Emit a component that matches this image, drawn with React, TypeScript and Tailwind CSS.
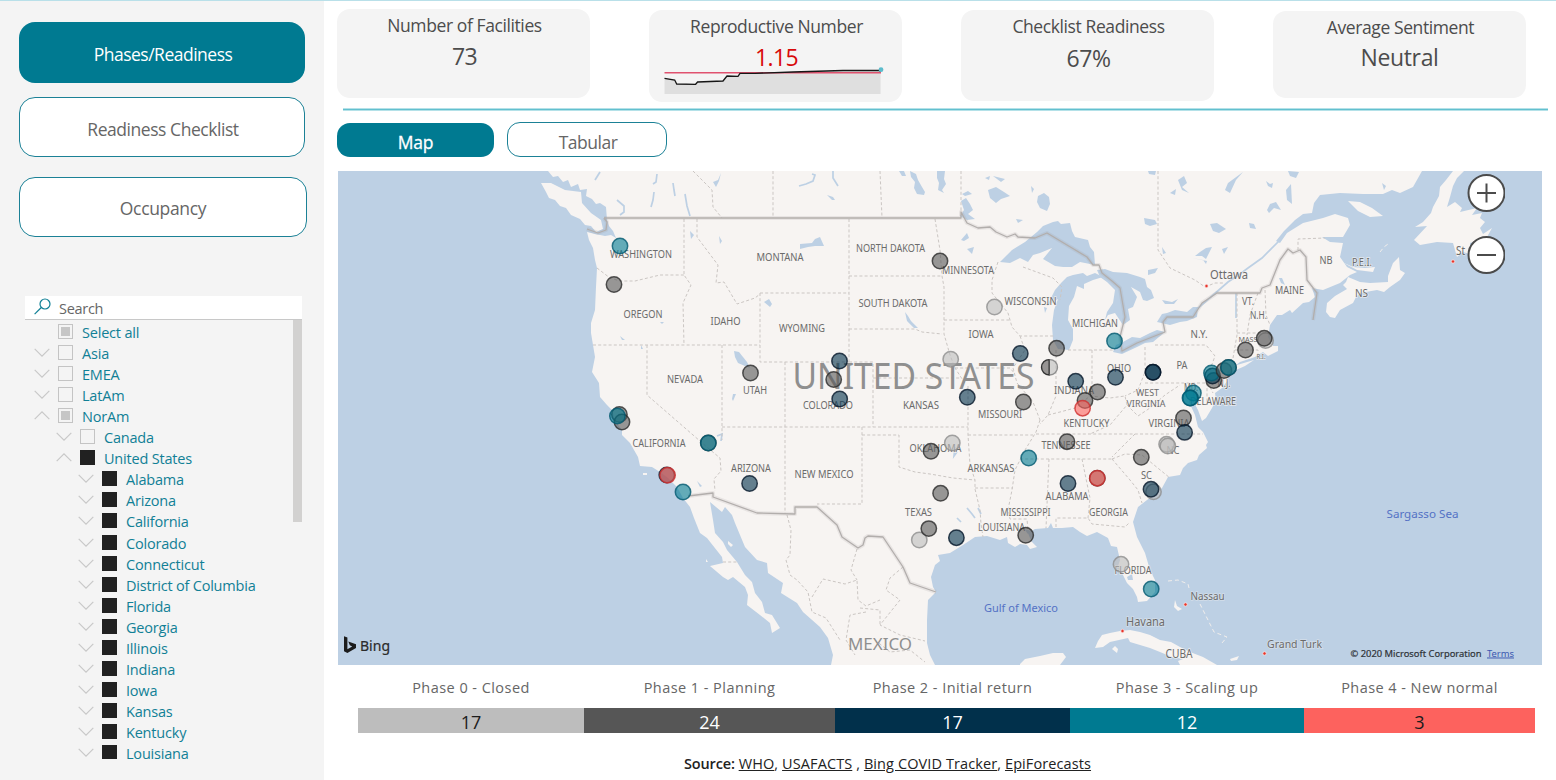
import React from "react";

type Label = [text: string, x: number, y: number, width: number, size?: number];

const LAND = [
  // Mainland
  "548,171 553,177 558,176 563,182 568,180 571,187 578,184 580,190 587,189 586,196 592,199 596,204 600,203 606,207 607,220 609,226 613,231 616,238 611,235 605,236 595,234 587,232 589,240 593,248 595,260 597,268 596,287 595,310 591,323 591,333 593,345 595,357 592,372 599,383 600,397 607,405 612,410 615,421 622,430 622,435 630,443 638,457 640,466 652,467 660,472 668,478 677,487 683,498 690,507 694,518 700,533 707,538 722,557 723,563 710,566 723,577 728,580 733,577 745,587 748,595 747,605 760,615 770,623 772,633 780,628 772,615 765,613 762,602 755,593 752,582 745,575 737,562 727,550 723,542 715,533 713,520 710,502 722,512 725,507 732,515 735,523 740,535 745,547 757,560 767,563 768,573 783,583 781,593 797,603 803,612 820,627 828,638 833,655 831,665 935,665 930,655 927,643 927,620 928,600 936,592 933,587 931,577 935,565 940,561 938,555 950,553 963,545 972,539 975,537 987,536 1000,540 1007,537 1008,543 1015,547 1020,544 1027,545 1030,549 1037,547 1032,542 1030,538 1028,533 1035,529 1048,528 1051,523 1053,528 1062,528 1073,527 1080,532 1087,536 1097,532 1108,538 1111,546 1117,547 1120,560 1118,566 1122,573 1127,583 1133,589 1137,597 1138,602 1147,601 1155,592 1155,580 1150,570 1145,553 1137,537 1133,522 1138,507 1147,500 1162,488 1168,477 1180,475 1183,468 1188,463 1197,460 1199,455 1207,448 1206,445 1208,442 1203,432 1198,427 1195,415 1189,402 1191,398 1198,410 1202,421 1206,418 1212,408 1216,400 1215,393 1222,388 1228,380 1227,372 1240,362 1255,357 1263,352 1268,356 1278,351 1278,346 1273,346 1268,337 1270,325 1277,315 1282,315 1290,310 1292,313 1303,303 1309,302 1315,297 1312,288 1323,290 1340,283 1350,275 1357,272 1347,267 1340,257 1343,243 1330,242 1322,237 1343,237 1350,225 1348,218 1335,214 1323,218 1303,223 1287,233 1280,243 1276,241 1284,231 1295,220 1303,214 1312,213 1314,203 1320,195 1340,193 1363,194 1383,194 1392,190 1400,193 1413,187 1422,171",
  // Vancouver Island
  "541,183 551,183 565,190 581,192 582,203 591,213 601,220 603,229 596,232 591,226 585,225 580,219 571,215 566,208 560,206 555,200 549,198 546,192",
  // Newfoundland
  "1453,171 1446,180 1440,187 1439,196 1433,207 1431,213 1423,222 1415,227 1427,226 1414,240 1420,245 1437,242 1453,243 1457,257 1463,252 1470,254 1470,243 1487,237 1492,228 1483,234 1480,228 1485,222 1480,218 1482,213 1472,215 1477,208 1460,212 1462,208 1455,202 1447,207 1450,197 1453,186 1457,178 1464,171",
  // Nova Scotia
  "1327,303 1326,312 1330,317 1335,318 1340,310 1353,303 1356,297 1360,293 1377,290 1384,292 1390,287 1400,280 1405,273 1400,270 1399,257 1393,263 1388,276 1388,282 1370,283 1360,282 1348,277 1346,282 1343,285 1347,289 1335,296",
  "1342,262 1353,267 1365,268 1375,267 1373,272 1357,270",
  // Anticosti
  "1348,201 1360,202 1372,208 1383,216 1370,217 1358,211",
  // Long Island
  "1229,372 1237,365 1254,360 1245,366 1236,370",
  // Cuba
  "1095,648 1098,641 1102,635 1110,633 1120,631 1130,630 1140,632 1150,635 1160,640 1171,642 1180,647 1190,652 1203,657 1217,665 1180,665 1178,661 1183,659 1172,657 1160,652 1150,648 1140,645 1130,642 1128,638 1110,642 1103,647",
  "1112,649 1115,646 1118,649 1117,653",
  "1020,664 1025,659 1040,656 1053,653 1063,653 1066,657 1060,665 1020,665",
  "1230,659 1239,656 1237,660 1231,661",
  "1175,600 1177,606 1182,609 1178,611 1174,607",
  "643,473 647,473 647,475 643,475",
  "706,559 708,562 706,562",
  "728,541 733,545 731,547 728,544",
];

const WATER = [
  // Superior
  "1000,262 1012,250 1025,242 1037,232 1043,226 1053,222 1058,221 1061,224 1070,223 1072,231 1075,237 1088,240 1090,247 1094,252 1095,265 1080,262 1072,267 1063,267 1055,266 1050,263 1043,259 1052,248 1040,253 1033,255 1028,262 1020,258 1010,263",
  // Michigan
  "1062,282 1067,277 1073,275 1083,273 1087,276 1095,273 1103,277 1093,280 1084,284 1084,289 1077,286 1074,297 1069,306 1068,320 1073,329 1073,340 1069,350 1058,349 1053,340 1052,325 1054,310 1058,299 1047,306 1055,290",
  // Huron
  "1097,270 1105,269 1113,272 1127,273 1140,277 1145,279 1147,287 1151,290 1154,298 1147,301 1143,300 1140,292 1131,287 1137,297 1133,307 1128,309 1130,320 1123,325 1115,313 1108,315 1105,320 1107,312 1113,303 1115,290 1107,282 1100,277",
  // Erie
  "1113,352 1116,345 1123,342 1132,337 1140,338 1150,333 1157,330 1165,332 1153,342 1145,343 1137,347 1122,354",
  // Ontario
  "1157,322 1162,314 1167,313 1175,310 1187,312 1193,307 1198,307 1197,317 1187,321 1180,322 1170,325",
  // Great Salt Lake
  "734,351 739,352 747,362 750,368 745,366 738,363 735,357",
  // Winnipeg and neighbours
  "910,171 916,174 918,180 922,187 925,192 924,195 917,194 914,188 915,182 911,177",
  "937,171 945,171 944,179 946,184 942,190 944,193 938,190 939,183 937,178",
  "899,171 904,171 906,176 902,176",
  "961,201 966,198 970,204 973,210 968,214 975,219 967,220 960,216 964,210",
  "1038,196 1044,193 1049,197 1050,204 1047,211 1040,208 1037,202",
  "988,190 996,187 1004,192 1010,196 1001,199 996,203 990,198",
  "962,194 968,191 972,194 965,196",
  "961,240 967,233 969,238 964,241",
  "967,249 974,247 972,254 969,251",
  "985,178 990,176 989,180",
  "993,176 1005,179 1001,182",
  "1016,219 1023,220 1018,223",
  "1031,186 1034,189 1032,193",
  "721,173 719,181 716,187 713,182 718,180",
  "719,236 722,241 720,244",
  "690,231 694,235 691,239",
  "800,244 812,243 815,239 820,237 824,246 815,246 808,247 800,249",
  "764,302 769,299 772,304 770,307",
  "827,195 833,197 835,200 832,200",
  "905,312 908,316 911,321 918,328 914,328 907,321",
  "1210,224 1217,223 1226,229 1219,233 1213,231",
  "1144,218 1155,220 1157,224 1150,226 1145,224",
  "1249,223 1254,224 1256,229 1250,228",
  "1206,248 1212,247 1206,259 1202,256 1195,256 1200,252",
  "1222,249 1228,247 1224,254",
  "1178,180 1184,176 1187,183 1182,187 1189,193 1182,190",
  "1170,193 1176,189 1175,195",
  "1266,181 1270,184 1273,183 1272,188 1268,186",
  "1228,183 1243,172 1236,180 1230,193 1225,190",
  "1267,210 1270,204 1276,202 1281,210 1274,208 1269,213",
  "1286,190 1291,184 1292,204 1287,200",
  "1288,171 1299,172 1296,178 1290,176",
  "1382,183 1386,186 1384,190",
  "1148,171 1156,171 1155,175 1149,174",
  "1162,300 1172,302 1178,299 1174,304 1165,304",
  "1148,270 1158,268 1155,273 1148,275",
  "1162,247 1166,253 1163,254",
  "1192,258 1207,261 1206,264 1203,260",
  "620,336 625,340 622,340",
  "660,322 664,322 662,324",
  "641,345 643,349 641,349",
  "1044,307 1047,308 1045,313",
  "1279,278 1282,278 1285,285 1281,283",
  "1045,528 1050,530 1047,533",
  "1127,577 1132,574 1133,580 1128,580",
  "1024,529 1032,531 1028,534",
  "733,394 736,394 733,401 732,399",
  "697,481 702,486 700,487",
];

const RIVERS = [
  "1197,309 1212,296 1228,282 1240,274 1248,268 1262,258 1280,240",
  "1236,293 1236,318",
  "799,186 806,184 813,181 815,175 812,174",
  "833,171 833,178 838,186",
  "685,194 687,206 690,216",
  "654,192 653,200 651,207",
  "657,174 656,182 653,184",
  "673,183 674,190 675,196",
  "955,447 954,456 957,452",
  "967,508 972,514 975,518",
  "978,508 981,514",
  "957,518 961,522",
  "595,180 600,172",
  "617,200 624,206 624,212 620,215",
  "717,436 722,434 721,441",
  "590,205 596,207 602,215 606,219",
  "1195,385 1193,400 1197,412",
];

const BORDERS = [
  "604,218 961,218 961,212 967,223 978,228 990,227 996,232 1007,237 1015,234 1018,237 1035,238 1047,233 1087,257 1093,265 1099,265 1102,273 1112,281 1120,288 1125,317 1120,337 1122,351 1137,343 1165,332 1163,322 1167,317 1193,317 1202,303 1217,293 1260,293 1262,288 1270,285 1280,260 1288,249 1293,253 1300,250 1306,257 1307,280 1317,293 1313,320",
  "587,229 598,233 606,230 607,222 604,218",
  "688,496 713,493 713,497 757,513 795,514 795,507 817,507 837,525 842,537 858,548 863,545 865,538 868,536 883,537 893,552 903,567 910,583 936,592",
];

const STATES = [
  "597,268 610,278 620,281 635,281 660,275 686,275",
  "684,219 684,275 691,285 683,303 684,345",
  "697,219 697,237 718,265 716,283 724,282 737,304 755,298 760,294",
  "760,293 849,293", "760,293 760,362 849,362", "849,219 849,362",
  "849,276 942,276", "849,329 915,329 922,332 942,334",
  "593,345 760,345", "722,345 722,440", "647,345 647,395 708,448 720,458 721,471 714,479 715,491",
  "785,362 785,514", "722,427 968,427", "849,362 873,362 873,427", "873,378 960,378",
  "862,427 862,504 817,504", "862,435 899,435 899,467 915,472 930,474 953,478 975,480",
  "968,386 968,435 970,465 975,480 975,489 980,510 981,524 983,537",
  "968,435 1033,435", "975,488 1013,488",
  "1040,420 1036,432 1025,450 1015,470 1012,490 1008,510 1010,519 1027,519 1028,530",
  "1049,459 1046,528", "1082,459 1090,498 1088,518", "1056,527 1056,518 1088,518 1092,524 1125,527 1130,522",
  "1020,459 1114,459", "1036,434 1203,434", "1112,459 1130,480 1138,490 1142,503",
  "1112,459 1125,454 1142,455 1148,460 1170,478", "1135,434 1125,444 1112,457",
  "935,219 940,250 942,276 944,287 944,334 950,355 955,368 966,385",
  "944,320 1010,320", "998,262 992,280 992,293 1008,313 1012,327 1020,336 1055,336",
  "955,368 1010,368 1015,374", "1020,336 1025,350 1013,368 1017,383 1033,402 1040,420",
  "1056,350 1056,396 1048,415 1040,424", "1092,350 1092,395", "1068,350 1113,350",
  "1145,347 1145,372 1138,390 1125,396", "1145,383 1208,383 1213,393", "1155,345 1206,345 1215,356 1210,370",
  "1048,415 1060,412 1075,408 1090,396 1110,398 1125,396 1127,405 1110,425 1090,434",
  "1127,405 1138,416 1150,408 1165,395 1180,385",
  "1237,293 1237,335 1233,358", "1258,293 1250,315 1247,335", "1265,290 1266,315 1270,325", "1237,333 1270,333",
  "1235,350 1258,350 1258,357", "1023,267 1053,278 1062,287 1060,300",
  "1158,171 1158,250 1170,268 1195,280 1205,287", "1298,250 1298,239 1325,238",
  "693,171 712,190 713,207 722,218", "773,171 773,218", "880,171 882,218", "961,171 961,212",
  "1207,383 1207,402", "1205,287 1215,283 1223,283",
  "787,515 791,530 790,555 786,560 790,575 797,580 808,592 812,612 826,618 840,640",
  "812,597 823,579 845,584 857,580 858,600 866,606 880,600", "857,549 851,570 857,580",
  "866,612 850,615 846,640 855,655", "903,567 890,578 886,590 900,600 880,625 900,635 925,641", "723,562 737,562",
  "875,640 890,652 910,650 925,662", "860,608 880,610 880,625",
];

const LABELS: Label[] = [
  ["WASHINGTON", 641, 258, 62], ["MONTANA", 780, 260.5, 47], ["NORTH DAKOTA", 890.5, 251.5, 69],
  ["MINNESOTA", 968, 273.5, 52], ["WISCONSIN", 1030.5, 304.5, 52], ["SOUTH DAKOTA", 893, 307, 69],
  ["OREGON", 643, 318, 39], ["IDAHO", 725.5, 325, 30], ["WYOMING", 802, 331.5, 46], ["NEVADA", 685, 382.5, 36],
  ["UTAH", 755, 393.5, 24], ["COLORADO", 828, 409, 50], ["KANSAS", 921, 409, 36], ["IOWA", 981, 338, 25],
  ["MICHIGAN", 1095, 327, 46], ["OHIO", 1119, 371.5, 24], ["PA", 1182, 369, 11], ["N.Y.", 1199, 338, 17],
  ["INDIANA", 1074, 394, 40], ["MISSOURI", 1000, 418, 44], ["WEST", 1147.5, 396, 23, 9.7], ["VIRGINIA", 1146, 407, 39, 9.7],
  ["DELAWARE", 1213, 404.5, 46], ["KENTUCKY", 1086.5, 427, 46], ["VIRGINIA", 1169, 427, 41],
  ["CALIFORNIA", 659, 447, 53], ["ARIZONA", 751, 471.5, 40], ["NEW MEXICO", 824, 478, 59],
  ["OKLAHOMA", 935.5, 451.5, 52], ["TENNESSEE", 1066, 449, 49], ["ARKANSAS", 991, 471.5, 47], ["NC", 1173, 453.5, 13],
  ["SC", 1146.5, 478.5, 11], ["ALABAMA", 1067, 500, 43], ["MISSISSIPPI", 1025.5, 516, 50], ["GEORGIA", 1108.5, 516, 39],
  ["TEXAS", 918.5, 516, 27], ["LOUISIANA", 1001.5, 531, 47], ["FLORIDA", 1133, 573.5, 37],
  ["MAINE", 1289.5, 294, 29], ["VT.", 1248, 305, 12], ["N.H.", 1258.5, 318.5, 17], ["NB", 1326, 264, 13],
  ["P.E.I.", 1362, 266, 20], ["NS", 1361.5, 297, 13], ["CUBA", 1179, 658, 27, 12],
  ["MASS", 1248, 341.5, 19, 7.5], ["R.I.", 1261, 359, 9, 7.5], ["N.J.", 1224, 387, 13], ["MD.", 1191, 391, 14],
];

const CITIES: Label[] = [
  ["Ottawa", 1229, 279, 38, 12], ["Havana", 1145.5, 626, 39, 12], ["Nassau", 1207.5, 599.5, 34, 11],
  ["Grand Turk", 1294.5, 648, 55, 11], ["St", 1460.5, 255, 9, 12],
];

const TOWN_DOTS = [[1206.5, 286], [1122.5, 631], [1185.5, 604.5], [1264.5, 653.5], [1453, 261.5]];

const COLORS = {
  closed: { fill: "#bdbdbd", line: "#8f8f8f" },
  planning: { fill: "#565656", line: "#2c2c2c" },
  initial: { fill: "#01304b", line: "#06182a" },
  scaling: { fill: "#007a91", line: "#045a70" },
  normal: { fill: "#fd625e", line: "#d03030" },
};
type Phase = keyof typeof COLORS;

const PINS: [Phase, number, number][] = [
  ["planning", 614, 284.5], ["scaling", 620, 246], ["planning", 940, 261], ["closed", 994.5, 307], ["closed", 950.7, 359.2],
  ["planning", 750.5, 373], ["initial", 839.5, 361], ["planning", 833.7, 379.5], ["initial", 839.7, 399], ["initial", 967.3, 397.3],
  ["initial", 1020.3, 353.5], ["planning", 1056.6, 348.3], ["scaling", 1114.5, 341], ["initial", 1075.7, 381.3],
  ["initial", 1115.5, 377.3], ["initial", 1153, 372.3], ["initial", 1153, 372.3], ["planning", 1097.5, 392], ["planning", 1085, 400.5],
  ["normal", 1082.6, 408.2], ["planning", 1023.4, 402], ["planning", 619.4, 414.5], ["planning", 622, 422], ["scaling", 617.4, 416],
  ["planning", 708.3, 443], ["scaling", 708.3, 443], ["initial", 666.8, 475], ["normal", 667.6, 475.3], ["scaling", 683, 492],
  ["initial", 749.6, 483.5], ["planning", 931, 451.3], ["closed", 952.3, 443], ["scaling", 1028.7, 458], ["planning", 1067, 441.7],
  ["initial", 1068, 483.5], ["planning", 1097.3, 478.2], ["normal", 1097.3, 478.2], ["planning", 1141.3, 457.3],
  ["closed", 1166.6, 444.3], ["closed", 1167.8, 446], ["planning", 1183.5, 418], ["initial", 1184.6, 432.4],
  ["closed", 1153.5, 491.8], ["initial", 1151, 489.3], ["planning", 940.6, 493.3], ["closed", 919.3, 540], ["planning", 928.8, 528.6],
  ["initial", 956.4, 537.7], ["planning", 1025.7, 535.3], ["closed", 1121, 564.3], ["scaling", 1151.2, 589],
  ["planning", 1213.8, 380.5], ["initial", 1212.5, 376], ["scaling", 1211.5, 373], ["planning", 1224, 370.5],
  ["planning", 1228.5, 367.5], ["scaling", 1228.5, 367.5], ["scaling", 1193.4, 393], ["scaling", 1190.5, 398], ["scaling", 1190, 398],
  ["planning", 1245.5, 350], ["closed", 1265.6, 340.5], ["planning", 1264.2, 338.3],
];

function FacilityMap() {
  return (
    <svg viewBox="338 171 1204 494" width="1204" height="494" className="block bg-[#bdd0e4]" fontFamily="'Noto Sans','Open Sans',sans-serif">
      <g fill="#f7f4f2">{LAND.map((p) => <polygon key={p} points={p} />)}</g>
      <g fill="#bdd0e4">{WATER.map((p) => <polygon key={p} points={p} />)}</g>
      <g fill="none" stroke="#bdd0e4" strokeWidth="1.7">{RIVERS.map((p) => <polyline key={p} points={p} />)}</g>
      <g fill="none" stroke="#f1eeec" strokeWidth="1" strokeDasharray="4 3">
        <polyline points="1168,581 1178,580 1188,584 1189,588" />
        <polyline points="1200,604 1207,618 1214,632 1227,637 1222,643" />
        <polyline points="1380,252 1384,247 1388,244" />
      </g>
      <g fill="none" stroke="#cbc6c3" strokeWidth="1" strokeDasharray="3 2.2">{STATES.map((p) => <polyline key={p} points={p} />)}</g>
      <g fill="none" strokeLinejoin="round">
        {BORDERS.map((p) => <polyline key={p} points={p} stroke="#9a9693" strokeOpacity=".16" strokeWidth="4" />)}
        {BORDERS.map((p) => <polyline key={p + "b"} points={p} stroke="#b2aeac" strokeWidth="1.3" />)}
      </g>
      <g textAnchor="middle" fill="#6b6b6b" stroke="#f7f4f2" strokeOpacity=".7" strokeWidth="1.6" paintOrder="stroke">
        {LABELS.map(([t, x, y, w, s]) => (
          <text key={t + y} x={x} y={y} fontSize={s ?? 10.3} textLength={w} lengthAdjust="spacingAndGlyphs">{t}</text>
        ))}
        {CITIES.map(([t, x, y, w, s]) => (
          <text key={t} x={x} y={y} fontSize={s} strokeOpacity=".4" textLength={w} lengthAdjust="spacingAndGlyphs">{t}</text>
        ))}
      </g>
      <g textAnchor="middle" fill="#8f8f8f">
        <text x="913.5" y="388.5" fontSize="36" textLength="242" lengthAdjust="spacingAndGlyphs">UNITED STATES</text>
        <text x="880" y="650" fontSize="17" textLength="64" lengthAdjust="spacingAndGlyphs">MEXICO</text>
      </g>
      <g textAnchor="middle" fill="#5472c4">
        <text x="1021" y="611.5" fontSize="11" textLength="74" lengthAdjust="spacingAndGlyphs">Gulf of Mexico</text>
        <text x="1422.500" y="517.5" fontSize="11" textLength="72" lengthAdjust="spacingAndGlyphs">Sargasso Sea</text>
      </g>
      {TOWN_DOTS.map(([x, y]) => <circle key={x} cx={x} cy={y} r="1.7" fill="#e8352a" stroke="#fbeeee" strokeWidth=".7" />)}
      {PINS.map(([phase, x, y], i) => (
        <circle key={i} cx={x} cy={y} r="7.7" fill={COLORS[phase].fill} fillOpacity=".6" stroke={COLORS[phase].line} strokeOpacity=".8" strokeWidth="1.5" />
      ))}
      <path d="M1049.2 359.6a7.7 7.7 0 0 0 0 15.4z" fill="#565454" fillOpacity=".6" stroke="#333" strokeWidth="1.4" />
      <path d="M1049.8 359.6a7.7 7.7 0 0 1 0 15.4" fill="#bdbdbd" fillOpacity=".6" stroke="#8f8f8f" strokeWidth="1.4" />
      <path d="M344 636.2l3.4 1.3v11.7l4.8-2.8-2.4-1.1-1.5-3.7 7.7 2.7v3.8l-8.6 5-3.4-1.9z" fill="#1c1c1c" />
      <text x="360" y="651" fontSize="15" fill="#2b2b2b" stroke="#2b2b2b" strokeWidth=".2" textLength="30" lengthAdjust="spacingAndGlyphs">Bing</text>
      <text x="1350.5" y="656.5" fontSize="9.5" fill="#2f3338" stroke="#2f3338" strokeWidth=".2" textLength="131" lengthAdjust="spacingAndGlyphs">© 2020 Microsoft Corporation</text>
      <text x="1487" y="656.5" fontSize="9.5" fill="#3b57b0" textDecoration="underline" textLength="27" lengthAdjust="spacingAndGlyphs">Terms</text>
    </svg>
  );
}

type Row = { label: string; depth: 0 | 1 | 2; open?: boolean; leaf?: boolean; state: "none" | "some" | "all" };
const ROWS: Row[] = [
  { label: "Select all", depth: 0, leaf: true, state: "some" },
  { label: "Asia", depth: 0, state: "none" },
  { label: "EMEA", depth: 0, state: "none" },
  { label: "LatAm", depth: 0, state: "none" },
  { label: "NorAm", depth: 0, open: true, state: "some" },
  { label: "Canada", depth: 1, state: "none" },
  { label: "United States", depth: 1, open: true, state: "all" },
  ...["Alabama", "Arizona", "California", "Colorado", "Connecticut", "District of Columbia", "Florida", "Georgia", "Illinois", "Indiana", "Iowa", "Kansas", "Kentucky", "Louisiana"].map(
    (label): Row => ({ label, depth: 2, state: "all" }),
  ),
];
const INDENT = ["pl-[9px]", "pl-[31px]", "pl-[53px]"];

function TreeRow({ row }: { row: Row }) {
  return (
    <div className={`flex h-[21px] shrink-0 items-center nth-[11]:mt-px ${INDENT[row.depth]}`}>
      <svg width="16" height="9" viewBox="0 0 16 9" className="mb-[2px] shrink-0" fill="none" stroke="#c8c8c8" strokeWidth="1.2">
        {!row.leaf && <path d={row.open ? "M.7 8.2 8 .9l7.300 7.300" : "M.7.8 8 8.100 15.300.8"} />}
      </svg>
      <span
        className={
          row.state === "all"
            ? "ml-2 mb-[2px] size-[15px] shrink-0 bg-[#212121]"
            : "ml-2 mb-[2px] flex size-[15px] shrink-0 items-center justify-center border border-[#c4c4c4]"
        }
      >
        {row.state === "some" && <span className="size-[9px] bg-[#c6c6c6]" />}
      </span>
      <span className="ml-[9px] text-[14.5px] leading-[21px] tracking-[-0.2px] whitespace-nowrap text-[#118096]">{row.label}</span>
    </div>
  );
}

function Sidebar() {
  return (
    <aside className="flex h-full w-[324px] shrink-0 flex-col bg-[#f4f4f4] pt-[21px]">
      <button className="ml-[19px] flex h-[61px] w-[286px] items-center justify-center rounded-[16px] bg-[#007a91] pt-1 pl-[2px] text-[17.5px] tracking-[-0.5px] text-white">Phases/Readiness</button>
      <button className="mt-[14px] ml-[19px] flex h-[60px] w-[286px] items-center justify-center rounded-[16px] border border-[#1b8196] bg-white pt-1 pl-[2px] text-[17.5px] tracking-[-0.45px] text-[#666]">Readiness Checklist</button>
      <button className="mt-[20px] ml-[19px] flex h-[60px] w-[288px] items-center justify-center rounded-[16px] border border-[#1b8196] bg-white pt-[3px] text-[17.5px] tracking-[-0.35px] text-[#666]">Occupancy</button>
      <div className="mt-[59px] ml-[25px] flex h-[24px] w-[277px] items-center border-b border-[#c8c8c8] bg-white pl-[9px] text-[14.5px] tracking-[-0.3px] text-[#666]">
        <svg width="17" height="17" viewBox="0 0 17 17" fill="none" stroke="#118096" strokeWidth="1.2" className="mr-2 mb-[2px]">
          <circle cx="11" cy="6" r="5" />
          <path d="M7.300 9.500.6 16.200" />
        </svg>
        <span className="pt-[2px]">Search</span>
      </div>
      <div className="ml-[25px] flex h-[439px] w-[277px] overflow-hidden">
        <div className="flex flex-1 flex-col overflow-hidden pt-[2px]">
          {ROWS.map((row) => <TreeRow key={row.label} row={row} />)}
        </div>
        <div className="h-[202px] w-[9px] bg-[#d2d1d0]" />
      </div>
    </aside>
  );
}

function Sparkline() {
  return (
    <svg width="222" height="30" viewBox="0 0 222 30" className="absolute top-[55px] left-[14px]">
      <path d="M1.500 13.300 11.700 15 13.700 19 32.600 19.300 34.600 17 60 16 64 11 75 11.300 77 8.300 92 8.300 130 7 180 5.500 217.600 5.300V29H1.500z" fill="#dfdfdf" />
      <path d="M1.500 7.700H218" stroke="#e0526f" strokeWidth="1.500" />
      <path d="M1.500 13.300 11.700 15 13.700 19 32.600 19.300 34.600 17 60 16 64 11 75 11.300 77 8.300 92 8.300 130 7 180 5.500 216 5.400 217.600 6.500" fill="none" stroke="#161616" strokeWidth="1.300" />
      <circle cx="218" cy="4.700" r="2.400" fill="#5cbccc" />
    </svg>
  );
}

const CARD = "relative flex w-[253px] shrink-0 flex-col items-center rounded-[13px] bg-[#f4f4f4] pt-[2px] text-[#4c4c4c]";

function Cards() {
  const title = "pl-[2px] text-[17.5px] leading-7 tracking-[-0.4px] whitespace-nowrap";
  return (
    <section className="ml-[13px] flex h-[107px] items-start gap-[59px]">
      <div className={`${CARD} mt-[8px] h-[89px]`}>
        <span className={title}>Number of Facilities</span>
        <span className="mt-px pl-[2px] text-[23px] leading-8 tracking-[-0.6px]">73</span>
      </div>
      <div className={`${CARD} mt-[9px] h-[92px]`}>
        <span className={title}>Reproductive Number</span>
        <span className="mt-px pl-[2px] text-[23px] leading-8 tracking-[-0.6px] text-[#d80a0a]">1.15</span>
        <Sparkline />
      </div>
      <div className={`${CARD} mt-[9px] h-[91px]`}>
        <span className={title}>Checklist Readiness</span>
        <span className="mt-[2px] pl-[2px] text-[23px] leading-8 tracking-[-0.4px]">67%</span>
      </div>
      <div className={`${CARD} mt-[10px] h-[87px]`}>
        <span className={title}>Average Sentiment</span>
        <span className="text-[23px] leading-8 tracking-[-0.35px]">Neutral</span>
      </div>
    </section>
  );
}

const PHASES = [
  { label: "Phase 0 - Closed", value: 17, width: "w-[226px]", color: "bg-[#bdbdbd] text-[#1c1c1c]" },
  { label: "Phase 1 - Planning", value: 24, width: "w-[251px]", color: "bg-[#565656] text-white" },
  { label: "Phase 2 - Initial return", value: 17, width: "w-[235px]", color: "bg-[#01304b] text-white" },
  { label: "Phase 3 - Scaling up", value: 12, width: "w-[234px]", color: "bg-[#007a91] text-white" },
  { label: "Phase 4 - New normal", value: 3, width: "w-[231px]", color: "bg-[#fd625e] text-[#1c1c1c]" },
];

export default function App() {
  return (
    <div className="flex h-[780px] w-[1556px] flex-col overflow-hidden bg-white font-['Open_Sans','Noto_Sans',sans-serif]">
      <div className="h-px shrink-0 bg-[#b9e0e9]" />
      <div className="flex min-h-0 flex-1">
        <Sidebar />
        <main className="flex min-w-0 flex-1 flex-col">
          <Cards />
          <div className="ml-[19px] h-[3px] w-[1205px] border-y border-[#b4e1e8] bg-[#62c0cf]" />
          <nav className="ml-[13px] flex h-[60px] items-start gap-[13px] pt-[11px]">
            <button className="mt-px flex h-[34px] w-[157px] items-center justify-center rounded-[13px] bg-[#007a91] pt-1 text-[17.5px] tracking-[-0.3px] text-white [-webkit-text-stroke:0.3px_white]">Map</button>
            <button className="flex h-[35px] w-[160px] items-center justify-center rounded-[13px] border border-[#1b8196] bg-white pt-1.5 pl-[2px] text-[17.5px] tracking-[-0.5px] text-[#666]">Tabular</button>
          </nav>
          <section className="relative ml-[14px] h-[494px] w-[1204px] shrink-0">
            <FacilityMap />
            <div className="absolute top-[3px] right-[37px] flex flex-col gap-[24px]">
              {["M10 19h19M19.500 9.500v19", "M10 19h19"].map((d) => (
                <button key={d} className="size-[38px]">
                  <svg width="38" height="38" viewBox="0 0 38 38" fill="none">
                    <circle cx="19.500" cy="19" r="18" fill="#fff" stroke="#4b4b4b" strokeWidth="2" />
                    <path d={d} stroke="#4b4b4b" strokeWidth="2" />
                  </svg>
                </button>
              ))}
            </div>
          </section>
          <section className="ml-[34px] flex pt-[11px]">
            {PHASES.map((p) => (
              <div key={p.label} className={`flex flex-col ${p.width}`}>
                <span className="text-center text-[14.5px] leading-6 tracking-[0.45px] whitespace-nowrap text-[#666]">{p.label}</span>
                <span className={`mt-[8px] h-[25px] text-center text-[18px] leading-[29px] ${p.color}`}>{p.value}</span>
              </div>
            ))}
          </section>
          <p className="mt-[19px] ml-[360px] text-[14.5px] leading-6 tracking-[0.1px] whitespace-pre text-[#222]">
            <b className="font-semibold tracking-[-0.15px]">Source:</b> <a className="underline">WHO</a>, <a className="underline">USAFACTS</a> , <a className="underline">Bing COVID Tracker</a>, <a className="underline">EpiForecasts</a>
          </p>
        </main>
      </div>
    </div>
  );
}
